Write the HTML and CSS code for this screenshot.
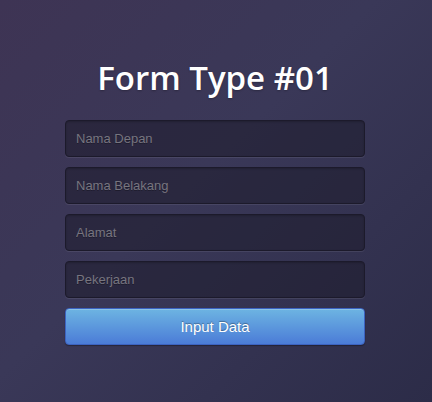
FILE: index.html
```html
<!DOCTYPE html>
<html>
<head>
<meta charset="utf-8">
<link rel="stylesheet" href="styles.css">
</head>
<body>
<main class="page">
  <form class="form">
    <h1 class="title">Form Type #01</h1>
    <input class="field" type="text" placeholder="Nama Depan">
    <input class="field" type="text" placeholder="Nama Belakang">
    <input class="field" type="text" placeholder="Alamat">
    <input class="field" type="text" placeholder="Pekerjaan">
    <button class="btn" type="button">Input Data</button>
  </form>
</main>
</body>
</html>
```
FILE: styles.css
```css
html, body {
  margin: 0;
  padding: 0;
  width: 432px;
  height: 402px;
  overflow: hidden;
}
body {
  background: linear-gradient(135deg, #3e3454 0%, #3a3858 45%, #2c2c48 100%);
  font-family: "Liberation Sans", Arial, sans-serif;
}
.page {
  display: flex;
  justify-content: center;
  padding: 54px 2px 0 0;
}
.form {
  width: 300px;
  display: flex;
  flex-direction: column;
  gap: 10px;
}
.title {
  margin: 0 0 9px;
  font-family: "Open Sans", sans-serif;
  font-weight: 600;
  font-size: 33px;
  line-height: 47px;
  color: #ffffff;
  text-align: center;
  text-shadow: 0 1px 2px rgba(0,0,0,0.25);
}
.field {
  box-sizing: border-box;
  height: 37px;
  width: 300px;
  margin: 0;
  padding: 0 10px;
  border: 1px solid #1c1a2b;
  border-radius: 4px;
  background: rgba(30, 28, 44, 0.55);
  box-shadow: 0 1px 0 rgba(255,255,255,0.08), inset 0 1px 2px rgba(0,0,0,0.2);
  font-family: "Liberation Sans", Arial, sans-serif;
  font-size: 13px;
  color: #ddd;
  outline: none;
}
.field::placeholder {
  color: #77757f;
  text-shadow: 0 1px 0 rgba(0,0,0,0.3);
}
.btn {
  box-sizing: border-box;
  height: 37px;
  width: 300px;
  margin: 0;
  border: 1px solid #3c63c0;
  border-radius: 4px;
  background: linear-gradient(to bottom, #6db4e2 0%, #4b7cd7 100%);
  box-shadow: inset 0 1px 0 rgba(255,255,255,0.2), 0 1px 1px rgba(0,0,0,0.3);
  color: #ffffff;
  font-family: "Liberation Sans", Arial, sans-serif;
  font-size: 15px;
  text-shadow: 0 -1px 1px rgba(0,0,0,0.35);
  cursor: pointer;
}
```
